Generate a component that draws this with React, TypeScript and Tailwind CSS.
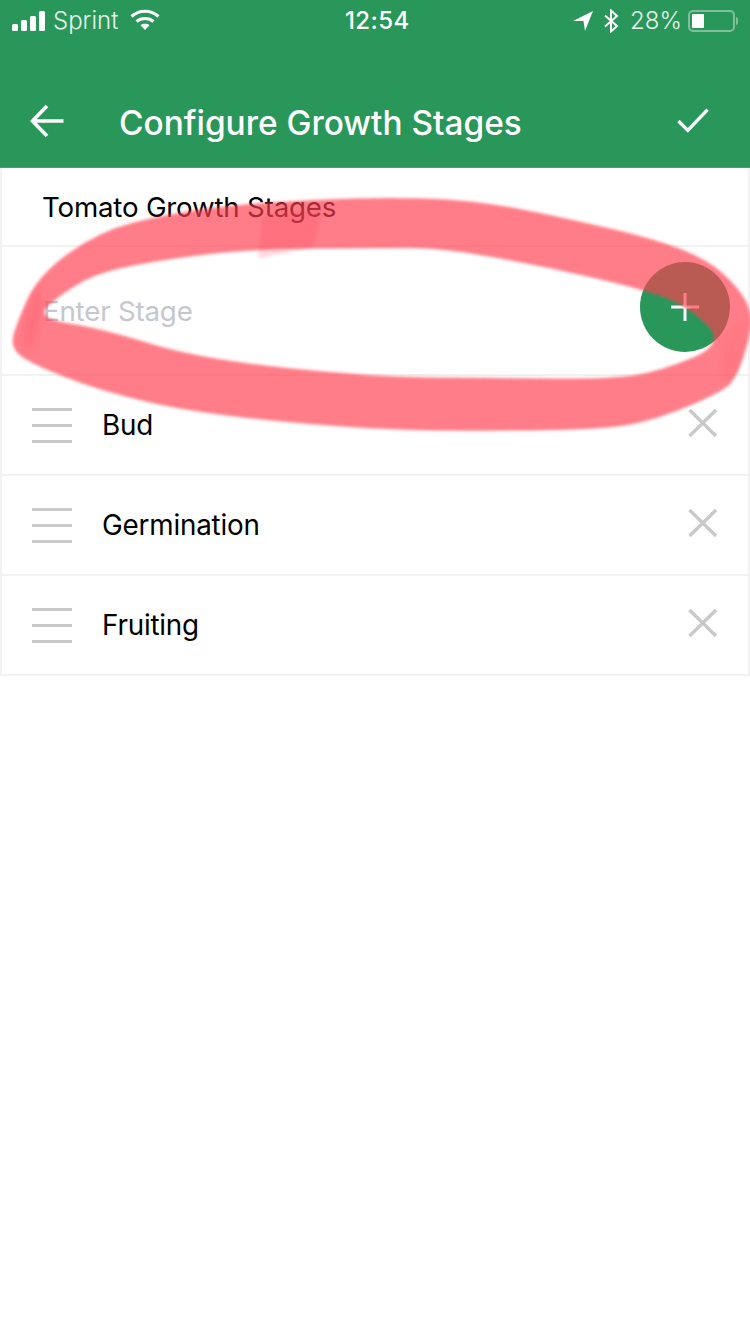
import React from "react";

const outer: [number, number][] = [
  [375,197],[475,200],[575,220],[658,240],[708,260],[738,287],[752,312],[750,337],[737,377],[722,392],[658,419],[608,429],[500,431],[375,430],[200,414],[100,391],[27,362],[11,347],[15,327],[38,275],[100,231],[167,214],[250,203],
];
const inner: [number, number][] = [
  [375,248],[442,248],[542,266],[642,289],[688,306],[726,344],[658,372],[608,379],[500,378],[375,377],[200,359],[100,328],[34,318],[64,292],[100,272],[167,259],[253,249],
];
function closed(pts: [number, number][]) {
  const n = pts.length;
  const mid = (a: [number, number], b: [number, number]) => [(a[0] + b[0]) / 2, (a[1] + b[1]) / 2];
  const s = mid(pts[n - 1], pts[0]);
  let d = `M${s[0]} ${s[1]}`;
  for (let i = 0; i < n; i++) {
    const m = mid(pts[i], pts[(i + 1) % n]);
    d += ` Q${pts[i][0]} ${pts[i][1]} ${m[0]} ${m[1]}`;
  }
  return d + "Z";
}

function Scribble() {
  return (
    <svg className="absolute left-0 top-0 pointer-events-none" width={750} height={450} viewBox="0 0 750 450">
      <defs>
        <filter id="soft" x="-5%" y="-5%" width="110%" height="110%">
          <feGaussianBlur stdDeviation="1.8" />
        </filter>
        <filter id="softer" x="-20%" y="-20%" width="140%" height="140%">
          <feGaussianBlur stdDeviation="3" />
        </filter>
      </defs>
      <g filter="url(#soft)">
        <path d={closed(outer) + " " + closed(inner)} fill="#ff3e4f" fillOpacity={0.67} fillRule="evenodd" />
        <path d="M262 216 L323 208 L313 248 L258 258 Z" fill="#ff3e4f" fillOpacity={0.2} />
      </g>
      <g filter="url(#softer)">
        <path d="M24 345 C24 320 30 300 42 285 L40 317 L32 350 Z" fill="#ff3e4f" fillOpacity={0.2} />
        <path d="M724 348 C730 335 738 325 746 322 L735 372 L722 380 Z" fill="#ff3e4f" fillOpacity={0.12} />
      </g>
    </svg>
  );
}

function Row({ label }: { label: string }) {
  return (
    <div className="h-[100px] flex items-center border-b-2 border-[#f2f2f2] pl-[30px] pr-[30px]">
      <div className="w-[40px] h-[35px] mt-[1px] flex flex-col justify-between">
        <div className="h-[3px] bg-[#c9c9c9]" />
        <div className="h-[3px] bg-[#c9c9c9]" />
        <div className="h-[3px] bg-[#c9c9c9]" />
      </div>
      <span className="ml-[30px] flex-1 text-[27.8px] leading-[34px] text-black tracking-[-0.2px]">{label}</span>
      <svg width="30" height="30" viewBox="0 0 30 30" className="-mt-[4px]">
        <path d="M1.5 2 L28 28 M28 2 L1.5 28" stroke="#c9c9c9" strokeWidth="3.4" fill="none" />
      </svg>
    </div>
  );
}

export default function App() {
  return (
    <div className="relative w-[750px] h-[1334px] bg-white overflow-hidden" style={{ fontFamily: "Inter, 'Liberation Sans', sans-serif" }}>
      <header className="bg-[#29975a] h-[168px] text-white flex flex-col border-b border-[#4b9e70]">
        <div className="h-[42px] relative flex items-center justify-between pl-[12px] pr-[12px]">
          <div className="flex items-center">
            <svg width="34" height="20" viewBox="0 0 34 20" fill="#fff">
              <rect x="0" y="13" width="6" height="7" rx="1.5" />
              <rect x="9" y="9" width="6" height="11" rx="1.5" />
              <rect x="18" y="5" width="6" height="15" rx="1.5" />
              <rect x="27" y="0" width="6" height="20" rx="1.5" />
            </svg>
            <span className="ml-[7px] text-[24px] font-light leading-none text-[#e6f4ec]">Sprint</span>
            <svg width="30" height="22" viewBox="0 0 30 22" className="ml-[12px] -mt-[2px]" fill="none" stroke="#fff" strokeWidth="3.2">
              <path d="M1.5 7.5 C9 0.5 21 0.5 28.5 7.5" />
              <path d="M6.5 12.5 C11 8.5 19 8.5 23.5 12.5" />
              <path d="M15 21 L10.5 16.2 C13 14.4 17 14.4 19.5 16.2 Z" fill="#fff" stroke="none" />
            </svg>
          </div>
          <span className="absolute left-[345px] top-[8px] text-[24px] leading-[26px] font-medium tracking-[0.4px]">12:54</span>
          <div className="flex items-center">
            <svg width="20" height="20" viewBox="0 0 20 20" fill="#fff">
              <path d="M0 10 L20 0 L12 20 L10.5 10 Z" />
            </svg>
            <svg width="16" height="24" viewBox="0 0 16 24" className="ml-[10px]" fill="none" stroke="#fff" strokeWidth="2">
              <path d="M2 6.5 L14 17 L8 22.5 L8 1.5 L14 7 L2 17.5" />
            </svg>
            <span className="ml-[11px] text-[24px] font-light leading-none text-[#e6f4ec]">28%</span>
            <div className="ml-[6px] w-[47px] h-[22px] rounded-[5px] border-2 border-[#7fc09b] p-[2px]">
              <div className="w-[12px] h-full bg-white rounded-[1px]" />
            </div>
            <div className="ml-[1px] w-[2px] h-[8px] bg-[#7fc09b] rounded-r-[2px]" />
          </div>
        </div>
        <div className="flex-1 flex items-center pl-[30px] pr-[41px] pt-[36px]">
          <svg width="34" height="34" viewBox="0 0 34 34" fill="none" stroke="#fff" strokeWidth="3.6" className="-mt-[4px]">
            <path d="M33.5 17 L3 17 M17 2 L2.5 17 L17 32" />
          </svg>
          <h1 className="ml-[55px] flex-1 text-[33.4px] leading-[40px] font-medium whitespace-nowrap">Configure Growth Stages</h1>
          <svg width="32" height="26" viewBox="0 0 34 26" fill="none" stroke="#fff" strokeWidth="3.6" className="-mt-[6px]">
            <path d="M1.5 14 L11.5 24 L32.5 2" />
          </svg>
        </div>
      </header>

      <div className="border-x-2 border-[#f2f2f2]">
        <div className="h-[79px] flex items-center border-b-2 border-[#f2f2f2] pl-[40px]">
          <span className="text-[27.7px] leading-[34px] text-black tracking-[-0.2px]">Tomato Growth Stages</span>
        </div>
        <div className="h-[129px] flex items-center justify-between border-b-2 border-[#f2f2f2] pl-[41px] pr-[18px]">
          <span className="text-[27.7px] leading-[34px] text-[#c5c6cf] tracking-[-0.2px]">Enter Stage</span>
          <div className="w-[90px] h-[90px] rounded-full bg-[#29975a] flex items-center justify-center -mt-[8px]">
            <svg width="28" height="28" viewBox="0 0 28 28" stroke="#fff" strokeWidth="3">
              <path d="M14 0 V28 M0 14 H28" />
            </svg>
          </div>
        </div>
        <Row label="Bud" />
        <Row label="Germination" />
        <Row label="Fruiting" />
      </div>
      <Scribble />
    </div>
  );
}
